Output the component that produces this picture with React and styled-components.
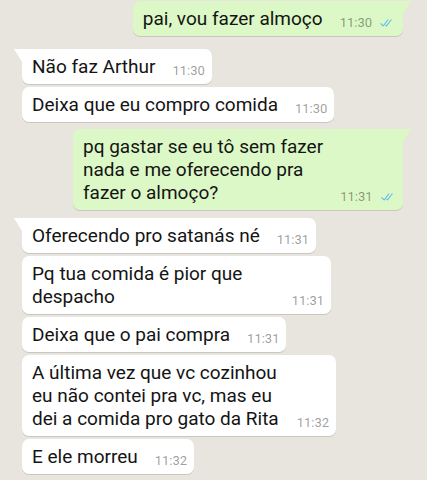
import React from 'react';
import styled, { createGlobalStyle, css } from 'styled-components';

const Global = createGlobalStyle`
  html, body { margin: 0; padding: 0; }
  body {
    background: #e8e4de;
    font-family: Roboto, "Noto Sans", Arial, sans-serif;
  }
`;

const Chat = styled.div`
  width: 427px;
  height: 480px;
  overflow: hidden;
  box-sizing: border-box;
  padding: 1px 24px 0 22px;
  display: flex;
  flex-direction: column;
  background: #e8e4de;
`;

const inTail = css`
  border-top-left-radius: 0;
  &::before {
    content: "";
    position: absolute;
    top: 0;
    left: -8px;
    width: 8px;
    height: 13px;
    background: #fff;
    clip-path: polygon(0 0, 100% 0, 100% 100%);
  }
`;

const outTail = css`
  border-top-right-radius: 0;
  &::before {
    content: "";
    position: absolute;
    top: 0;
    right: -8px;
    width: 8px;
    height: 13px;
    background: #dcf8c6;
    clip-path: polygon(0 0, 100% 0, 0 100%);
  }
`;

const Bubble = styled.div`
  position: relative;
  box-sizing: border-box;
  align-self: ${(p) => (p.$out ? 'flex-end' : 'flex-start')};
  margin-top: ${(p) => p.$gap}px;
  width: ${(p) => (p.$w ? `${p.$w}px` : 'auto')};
  background: ${(p) => (p.$out ? '#dcf8c6' : '#ffffff')};
  border-radius: 7px;
  box-shadow: 0 1px 0.5px rgba(0, 0, 0, 0.13);
  padding: 6px 6px 6px 10px;
  display: flex;
  align-items: flex-end;
  gap: 17px;
  ${(p) => p.$tail && (p.$out ? outTail : inTail)}
`;

const Text = styled.div`
  flex: 1 0 auto;
  font-size: 19px;
  line-height: 23px;
  color: #141414;
  white-space: pre;
`;

const Meta = styled.div`
  flex: none;
  display: flex;
  align-items: center;
  gap: 6px;
  font-size: 13px;
  line-height: 15px;
  color: rgba(0, 0, 0, 0.4);
  padding-right: ${(p) => (p.$out ? 3 : 1)}px;
`;

const Checks = () => (
  <svg width="16" height="12" viewBox="0 0 16 15" fill="#58bdf0" aria-hidden="true">
    <path d="M15.01 3.316l-.478-.372a.365.365 0 0 0-.51.063L8.666 9.879a.32.32 0 0 1-.484.033l-.358-.325a.319.319 0 0 0-.484.032l-.378.483a.418.418 0 0 0 .036.541l1.32 1.266c.143.14.361.125.484-.033l6.272-8.048a.366.366 0 0 0-.064-.512zm-4.1 0l-.478-.372a.365.365 0 0 0-.51.063L4.566 9.879a.32.32 0 0 1-.484.033L1.891 7.769a.366.366 0 0 0-.515.006l-.423.433a.364.364 0 0 0 .006.514l3.258 3.185c.143.14.361.125.484-.033l6.272-8.048a.365.365 0 0 0-.063-.51z" />
  </svg>
);

const messages = [
  { out: true, tail: true, gap: 0, text: 'pai, vou fazer almoço', time: '11:30' },
  { tail: true, gap: 13, text: 'Não faz Arthur', time: '11:30' },
  { gap: 3, text: 'Deixa que eu compro comida', time: '11:30' },
  { out: true, tail: true, gap: 7, w: 330, text: 'pq gastar se eu tô sem fazer\nnada e me oferecendo pra\nfazer o almoço?', time: '11:31' },
  { tail: true, gap: 8, text: 'Oferecendo pro satanás né', time: '11:31' },
  { gap: 3, w: 309, text: 'Pq tua comida é pior que\ndespacho', time: '11:31' },
  { gap: 3, text: 'Deixa que o pai compra', time: '11:31' },
  { gap: 3, w: 314, text: 'A última vez que vc cozinhou\neu não contei pra vc, mas eu\ndei a comida pro gato da Rita', time: '11:32' },
  { gap: 3, text: 'E ele morreu', time: '11:32' },
];

export default function App() {
  return (
    <>
      <Global />
      <Chat>
        {messages.map((m, i) => (
          <Bubble key={i} $out={m.out} $tail={m.tail} $gap={m.gap} $w={m.w}>
            <Text>{m.text}</Text>
            <Meta $out={m.out}>
              <span>{m.time}</span>
              {m.out && <Checks />}
            </Meta>
          </Bubble>
        ))}
      </Chat>
    </>
  );
}
